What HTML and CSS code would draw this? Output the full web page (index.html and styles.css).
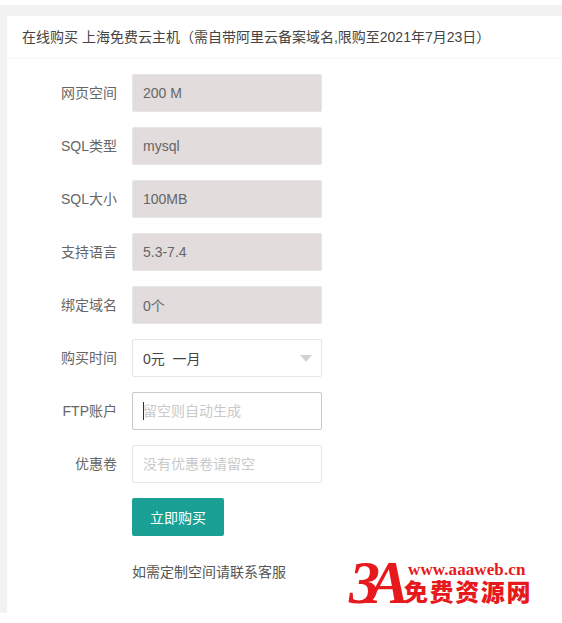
FILE: index.html
```html
<!DOCTYPE html>
<html lang="zh">
<head>
<meta charset="utf-8">
<title>在线购买</title>
<link rel="stylesheet" href="styles.css">
</head>
<body>
<main class="page">
  <section class="card">
    <header class="card-header">在线购买 上海免费云主机（需自带阿里云备案域名,限购至2021年7月23日）</header>
    <form class="card-body">
      <div class="row"><label class="label">网页空间</label><input class="field readonly" readonly value="200 M"></div>
      <div class="row"><label class="label">SQL类型</label><input class="field readonly" readonly value="mysql"></div>
      <div class="row"><label class="label">SQL大小</label><input class="field readonly" readonly value="100MB"></div>
      <div class="row"><label class="label">支持语言</label><input class="field readonly" readonly value="5.3-7.4"></div>
      <div class="row"><label class="label">绑定域名</label><input class="field readonly" readonly value="0个"></div>
      <div class="row"><label class="label">购买时间</label>
        <div class="select"><span>0元&nbsp; 一月</span><i class="arrow"></i></div>
      </div>
      <div class="row"><label class="label">FTP账户</label>
        <div class="focus-wrap"><input class="field focused" placeholder="留空则自动生成"><i class="caret"></i></div>
      </div>
      <div class="row"><label class="label">优惠卷</label><input class="field" placeholder="没有优惠卷请留空"></div>
      <div class="row"><span class="label"></span><button class="btn" type="button">立即购买</button></div>
      <div class="row note-row"><span class="label"></span><p class="note">如需定制空间请联系客服</p></div>
    </form>
  </section>
</main>
<div class="watermark" aria-label="3A 免费资源网">
  <span class="wm-mark">3A</span>
  <span class="wm-text">
    <span class="wm-url">www.aaaweb.cn</span>
    <span class="wm-name">免费资源网</span>
  </span>
</div>
</body>
</html>
```
FILE: styles.css
```css
* { box-sizing: border-box; }
html, body { margin: 0; height: 100%; background: #fff; }
body {
  padding-top: 5px;
  font-family: "Liberation Sans", "Noto Sans CJK SC", sans-serif;
  font-size: 14px;
  color: #666;
  overflow: hidden;
}
.page {
  height: 608px;
  background: #f2f2f2;
  padding: 11px 0 0 7px;
}
.card {
  background: #fff;
  height: 597px;
  border-radius: 2px 0 0 0;
}
.card-header {
  height: 43px;
  line-height: 42px;
  padding: 0 15px;
  color: #444;
  border-bottom: 1px solid #f6f6f6;
}
.card-body { padding: 15px 15px 0; }
.row { display: flex; margin-bottom: 15px; }
.label {
  flex: none;
  width: 110px;
  padding: 9px 15px;
  line-height: 20px;
  text-align: right;
  color: #666;
}
.field {
  display: block;
  width: 190px;
  height: 38px;
  padding: 0 10px;
  border: 1px solid #e6e6e6;
  border-radius: 2px;
  background: #fff;
  color: rgba(0,0,0,.85);
  font: inherit;
  outline: none;
}
.field::placeholder { color: #c9c9c9; opacity: 1; }
.readonly { background: #e2dcdc; color: #666; border-color: #e6e6e6; }
.focused { border-color: #c9c9c9; }
.focus-wrap { position: relative; width: 190px; height: 38px; }
.caret {
  position: absolute;
  left: 11px;
  top: 10px;
  width: 1px;
  height: 18px;
  background: #333;
}
.select {
  position: relative;
  width: 190px;
  height: 38px;
  line-height: 38px;
  padding: 0 10px;
  border: 1px solid #e6e6e6;
  border-radius: 2px;
  color: #444;
}
.arrow {
  position: absolute;
  right: 9px;
  top: 15px;
  width: 0;
  height: 0;
  border-style: solid;
  border-width: 7px 6px 0;
  border-color: #d2d2d2 transparent transparent;
}
.btn {
  width: 92px;
  height: 38px;
  padding: 0;
  border: 0;
  border-radius: 2px;
  background: #1aa094;
  color: #fff;
  font: inherit;
}
.note-row { margin: 0; }
.note { margin: 8px 0 0; line-height: 26px; color: #555; }
.watermark {
  position: absolute;
  left: 349px;
  top: 555px;
  display: flex;
  align-items: flex-start;
  color: #e8191c;
}
.wm-mark {
  font: italic 700 62px/54px "Liberation Serif", serif;
  letter-spacing: -12px;
  width: 56px;
  white-space: nowrap;
}
.wm-text { display: flex; flex-direction: column; margin-top: 5px; }
.wm-url { font: 700 17px/19px "Liberation Serif", serif; margin-left: 3px; letter-spacing: .1px; }
.wm-name { font: 900 24px/24px "Noto Sans CJK SC", sans-serif; letter-spacing: 1.6px; margin-left: -1px; white-space: nowrap; }
```
